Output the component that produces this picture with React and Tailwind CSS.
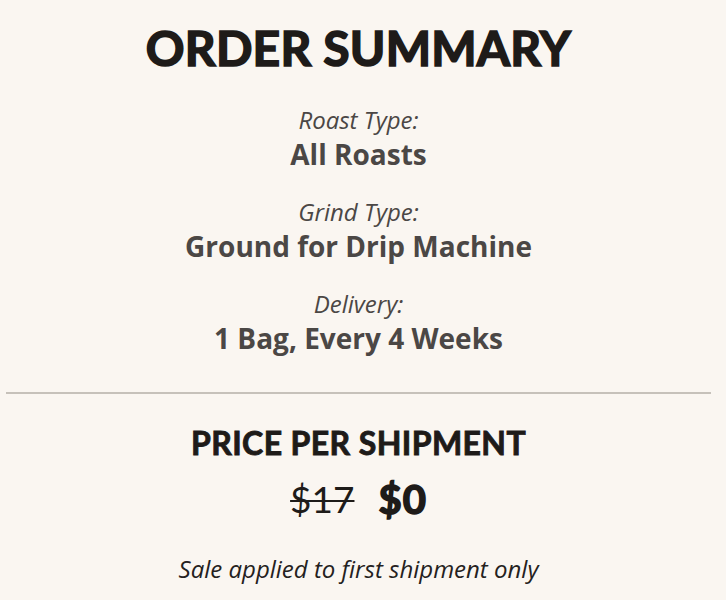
import React from 'react';

const DETAILS = [
  { label: 'Roast Type:', value: 'All Roasts' },
  { label: 'Grind Type:', value: 'Ground for Drip Machine' },
  { label: 'Delivery:', value: '1 Bag, Every 4 Weeks' },
];

export default function App() {
  return (
    <div className="min-h-[600px] w-full bg-[#faf6f1] pl-[6px] pr-[15px] text-center font-['Open_Sans',sans-serif]">
      <div className="pt-[18px]">
        <h1 className="font-['Lato',sans-serif] text-[48px] font-bold leading-[60px] tracking-[0.2px] text-[#1e1b19] [-webkit-text-stroke:1.6px_#1e1b19]">
          ORDER SUMMARY
        </h1>
        <div className="mt-[26px] flex flex-col gap-[24px]">
          {DETAILS.map((d) => (
            <div key={d.label} className="flex flex-col">
              <p className="text-[24px] italic leading-[32px] text-[#4b4745]">{d.label}</p>
              <p className="text-[28px] font-bold leading-[36px] text-[#4b4745]">{d.value}</p>
            </div>
          ))}
        </div>
      </div>
      <div className="mt-[36px] h-[2px] bg-[#c6c1ba]" />
      <div className="pt-[29px]">
        <h2 className="font-['Lato',sans-serif] text-[32px] font-bold leading-[40px] tracking-[0.4px] text-[#1e1b19] [-webkit-text-stroke:0.9px_#1e1b19]">
          PRICE PER SHIPMENT
        </h2>
        <div className="mt-[11px] flex items-center justify-center gap-[24px] font-['Lato',sans-serif] leading-[50px] text-[#1e1b19]">
          <span className="text-[37px] line-through decoration-[2px]">$17</span>
          <span className="text-[40px] font-bold tracking-[1px] [-webkit-text-stroke:1.6px_#1e1b19]">$0</span>
        </div>
        <p className="mt-[29px] text-[24px] italic leading-[32px] text-[#242120]">
          Sale applied to first shipment only
        </p>
      </div>
    </div>
  );
}
